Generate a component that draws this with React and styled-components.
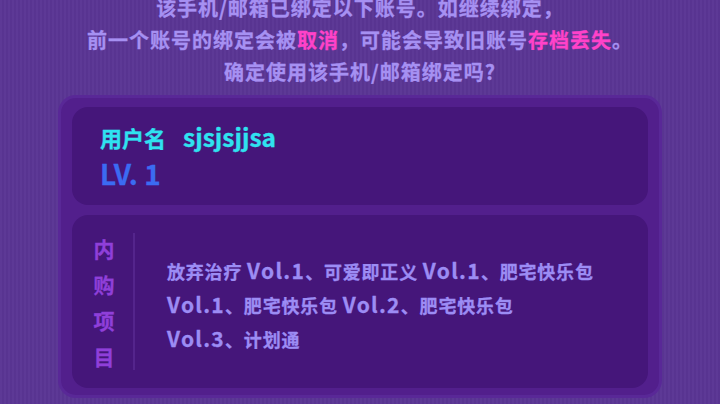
import React from 'react'
import styled, { createGlobalStyle } from 'styled-components'

const GlobalStyle = createGlobalStyle`
	html, body {
		margin: 0;
		padding: 0;
	}
	body {
		width: 720px;
		height: 404px;
		overflow: hidden;
		background-color: #5a3594;
		background-image: repeating-linear-gradient(90deg, rgba(255, 255, 255, 0.018) 0 2px, rgba(0, 0, 0, 0.018) 2px 4px);
		font-family: "Noto Sans CJK SC", "Noto Sans", sans-serif;
		font-weight: 700;
		-webkit-text-stroke: 0.3px currentColor;
	}
`;

const Page = styled.div`
	display: flex;
	flex-direction: column;
	align-items: center;
`;

const Notice = styled.div`
	margin-top: -8px;
	text-align: center;
	color: #a690f2;
	font-size: 20px;
	line-height: 32px;
	letter-spacing: 1px;
`;

const NoticeLine = styled.div`
	white-space: nowrap;
`;

const Warn = styled.span`
	color: #ff42c9;
`;

const Panel = styled.div`
	box-sizing: border-box;
	margin-top: 7px;
	width: 604px;
	padding: 9px 11px 7px;
	display: flex;
	flex-direction: column;
	gap: 10px;
	background: #521f8c;
	border: 3px solid #592897;
	border-radius: 18px;
`;

const Card = styled.div`
	box-sizing: border-box;
	background: #45167a;
	border-radius: 16px;
	height: ${p => p.$height}px;
`;

const AccountCard = styled(Card)`
	padding: 14px 28px 0;
`;

const NameRow = styled.div`
	display: flex;
	align-items: baseline;
	gap: 17px;
	color: #2fe2f0;
	font-size: 22px;
	line-height: 32px;
`;

const UserName = styled.span`
	font-size: 24.5px;
`;

const Level = styled.div`
	color: #3b6bf2;
	font-size: 28px;
	line-height: 40px;
`;

const ItemsCard = styled(Card)`
	display: flex;
	align-items: center;
	padding: 0 0 0 21px;
`;

const Label = styled.div`
	width: 22px;
	color: #8f3fd9;
	font-size: 21px;
	line-height: 36px;
	text-align: center;
`;

const Divider = styled.div`
	align-self: stretch;
	margin: 18px 32px 18px 18px;
	width: 2px;
	background: #54258c;
`;

const Items = styled.div`
	margin-top: 6px;
	color: #9c8cf4;
	font-size: 18px;
	line-height: 33px;
	letter-spacing: 0.8px;
`;

const ItemLine = styled.div`
	white-space: nowrap;
`;

// volume tags sit a little larger than the CJK names around them
const Vol = styled.span`
	font-size: 21px;
	letter-spacing: 1.3px;
`;

const items = [
	'放弃治疗 Vol.1、可爱即正义 Vol.1、肥宅快乐包',
	'Vol.1、肥宅快乐包 Vol.2、肥宅快乐包',
	'Vol.3、计划通',
];

const renderLine = line =>
	line.split(/(Vol\.\d)/).map((part, i) =>
		/^Vol\.\d$/.test(part) ? <Vol key={i}>{part}</Vol> : part
	);

const App = () => {
	return (
		<>
			<GlobalStyle />
			<Page>
				<Notice>
					<NoticeLine>该手机/邮箱已绑定以下账号。如继续绑定，</NoticeLine>
					<NoticeLine>前一个账号的绑定会被<Warn>取消</Warn>，可能会导致旧账号<Warn>存档丢失</Warn>。</NoticeLine>
					<NoticeLine>确定使用该手机/邮箱绑定吗?</NoticeLine>
				</Notice>
				<Panel>
					<AccountCard $height={98}>
						<NameRow>
							<span>用户名</span>
							<UserName>sjsjsjjsa</UserName>
						</NameRow>
						<Level>LV. 1</Level>
					</AccountCard>
					<ItemsCard $height={173}>
						<Label>
							{'内购项目'.split('').map(c => <div key={c}>{c}</div>)}
						</Label>
						<Divider />
						<Items>
							{items.map(line => <ItemLine key={line}>{renderLine(line)}</ItemLine>)}
						</Items>
					</ItemsCard>
				</Panel>
			</Page>
		</>
	)
};

export default App
